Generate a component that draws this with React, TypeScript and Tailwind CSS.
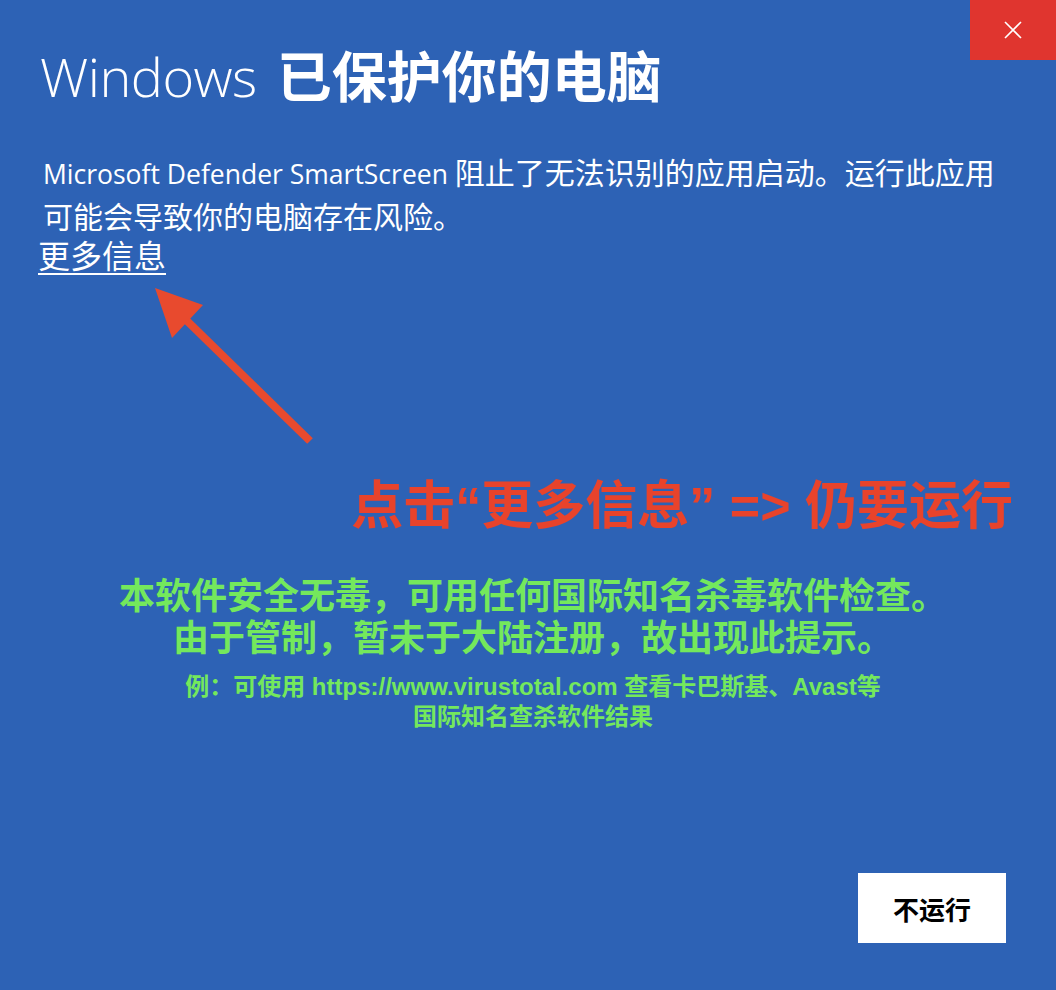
import React from "react";

const cjk = { fontFamily: '"Noto Sans CJK SC", sans-serif' };
const body = { fontFamily: '"Open Sans", "Noto Sans CJK SC", sans-serif' };
const note = { fontFamily: '"Liberation Sans", "Noto Sans CJK SC", sans-serif' };

export default function App() {
  return (
    <div className="relative w-[1056px] h-[990px] bg-[#2d62b5] overflow-hidden text-white">
      {/* close button */}
      <div className="absolute top-0 right-0 w-[86px] h-[60px] bg-[#e0352f] flex items-center justify-center">
        <svg width="20" height="20" viewBox="0 0 20 20">
          <path d="M2 2 L18 18 M18 2 L2 18" stroke="#fff" strokeWidth="1.6" />
        </svg>
      </div>

      <div className="flex flex-col px-[40px] pt-[46px]">
        {/* title */}
        <h1 className="flex items-baseline leading-none">
          <span className="text-[54px] font-light tracking-[-0.5px]" style={body}>Windows</span>
          <span className="ml-[20px] text-[55px] font-bold" style={cjk}>已保护你的电脑</span>
        </h1>

        {/* message */}
        <div className="mt-[48px] pl-[3px] text-[26.5px] leading-[41px]" style={body}>
          <p>
            Microsoft Defender SmartScreen <span className="text-[30px]" style={cjk}>阻止了无法识别的应用启动。运行此应用</span>
          </p>
          <p className="text-[30px]" style={cjk}>可能会导致你的电脑存在风险。</p>
        </div>
        <a className="w-fit -ml-[2px] text-[32px] leading-[36px] underline underline-offset-[5px] decoration-[2px]" style={cjk}>
          更多信息
        </a>

        {/* arrow annotation */}
        <svg className="mt-[14px] ml-[110px]" width="170" height="170" viewBox="0 0 170 170">
          <line x1="160" y1="155" x2="30" y2="28" stroke="#e84a2e" strokeWidth="8" />
          <polygon points="5,2 53,19 22,52" fill="#e84a2e" />
        </svg>

        {/* red instruction */}
        <p className="mt-[24px] self-end pr-[3px] text-[52px] font-bold leading-none text-[#e8432b]" style={note}>
          点击“更多信息” =&gt; 仍要运行
        </p>

        {/* green notice */}
        <div className="mt-[44px] ml-[10px] flex flex-col items-center text-[#74e85c] font-bold" style={note}>
          <p className="text-[36px] leading-[42px]">本软件安全无毒，可用任何国际知名杀毒软件检查。</p>
          <p className="text-[36px] leading-[42px]">由于管制，暂未于大陆注册，故出现此提示。</p>
          <p className="mt-[12px] text-[24px] leading-[30px]">例：可使用 https://www.virustotal.com 查看卡巴斯基、Avast等</p>
          <p className="text-[24px] leading-[30px]">国际知名查杀软件结果</p>
        </div>
      </div>

      {/* button */}
      <div className="absolute left-[858px] top-[873px] w-[148px] h-[70px] bg-white flex items-center justify-center">
        <span className="text-[26px] font-bold text-black" style={cjk}>不运行</span>
      </div>
    </div>
  );
}
